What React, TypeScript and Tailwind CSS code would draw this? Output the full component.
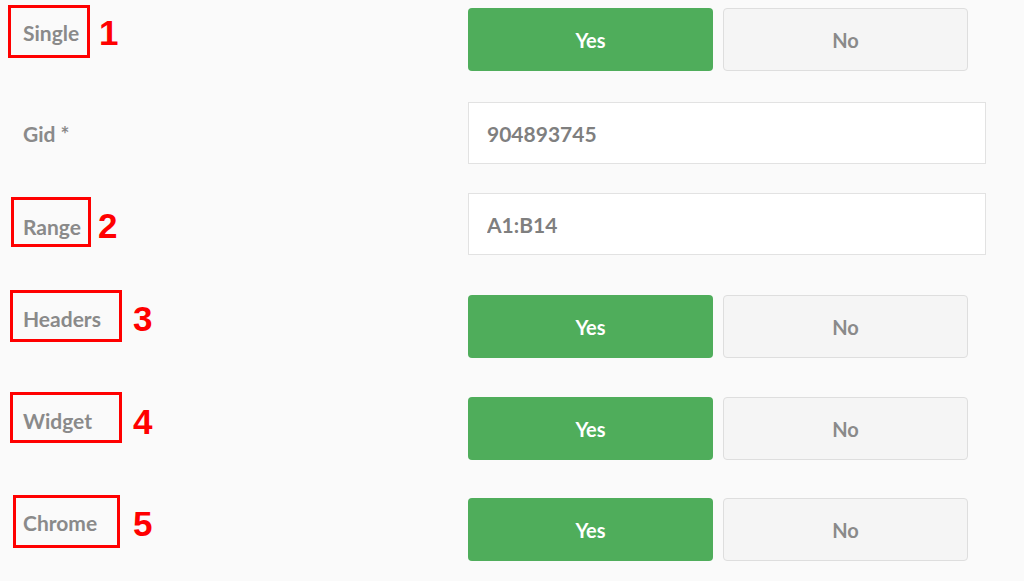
import React, { useState } from 'react';

type Mark = { n: string; box: string; num: string };

const font = { fontFamily: 'Lato, "Open Sans", sans-serif' };

const Toggle: React.FC<{ value: boolean; onChange: (v: boolean) => void }> = ({ value, onChange }) => (
  <div className="flex gap-[10px]">
    <button
      onClick={() => onChange(true)}
      className={`w-[245px] h-[63px] rounded-[4px] text-[20px] font-bold ${value ? 'bg-[#4fad5b] text-white' : 'bg-[#f5f5f5] text-[#8a8a8a] border border-[#dedede]'}`}
    >
      Yes
    </button>
    <button
      onClick={() => onChange(false)}
      className={`w-[245px] h-[63px] rounded-[4px] text-[20px] font-bold ${!value ? 'bg-[#4fad5b] text-white' : 'bg-[#f5f5f5] text-[#8a8a8a] border border-[#dedede]'}`}
    >
      No
    </button>
  </div>
);

const Row: React.FC<{ label: string; labelTop: string; mt: string; mark?: Mark; children: React.ReactNode }> = ({ label, labelTop, mt, mark, children }) => (
  <div className={`flex ${mt}`}>
    <div className="relative w-[468px] shrink-0">
      <div className={`pl-[23px] ${labelTop} text-[21px] leading-[24px] font-bold text-[#8a8a8a]`}>{label}</div>
      {mark && (
        <>
          <div className={`absolute border-[3px] border-[#ff0000] ${mark.box}`} />
          <div
            className={`absolute text-[35px] leading-[35px] font-bold text-[#ff0000] ${mark.num}`}
            style={{ fontFamily: '"Liberation Sans", Arial, sans-serif' }}
          >
            {mark.n}
          </div>
        </>
      )}
    </div>
    {children}
  </div>
);

const Field: React.FC<{ value: string }> = ({ value }) => (
  <input
    readOnly
    value={value}
    className="w-[518px] h-[62px] bg-white border border-[#e2e2e2] px-[18px] text-[21px] font-bold text-[#7f7f7f] outline-none"
    style={font}
  />
);

export default function App() {
  const [single, setSingle] = useState(true);
  const [headers, setHeaders] = useState(true);
  const [widget, setWidget] = useState(true);
  const [chrome, setChrome] = useState(true);

  return (
    <div className="w-[1024px] h-[581px] bg-[#fafafa] overflow-hidden pt-[8px]" style={font}>
      <Row label="Single" labelTop="pt-[13px]" mt="mt-0" mark={{ n: '1', box: 'left-[8px] top-[-3px] w-[82px] h-[53px]', num: 'left-[99px] top-[7px]' }}>
        <Toggle value={single} onChange={setSingle} />
      </Row>
      <Row label="Gid *" labelTop="pt-[20px]" mt="mt-[31px]">
        <Field value="904893745" />
      </Row>
      <Row label="Range" labelTop="pt-[22px]" mt="mt-[29px]" mark={{ n: '2', box: 'left-[11px] top-[4px] w-[80px] h-[50px]', num: 'left-[98px] top-[15px]' }}>
        <Field value="A1:B14" />
      </Row>
      <Row label="Headers" labelTop="pt-[12px]" mt="mt-[40px]" mark={{ n: '3', box: 'left-[10px] top-[-5px] w-[112px] h-[52px]', num: 'left-[133px] top-[6px]' }}>
        <Toggle value={headers} onChange={setHeaders} />
      </Row>
      <Row label="Widget" labelTop="pt-[12px]" mt="mt-[39px]" mark={{ n: '4', box: 'left-[10px] top-[-5px] w-[112px] h-[51px]', num: 'left-[133px] top-[7px]' }}>
        <Toggle value={widget} onChange={setWidget} />
      </Row>
      <Row label="Chrome" labelTop="pt-[13px]" mt="mt-[38px]" mark={{ n: '5', box: 'left-[13px] top-[-3px] w-[107px] h-[53px]', num: 'left-[133px] top-[8px]' }}>
        <Toggle value={chrome} onChange={setChrome} />
      </Row>
    </div>
  );
}
